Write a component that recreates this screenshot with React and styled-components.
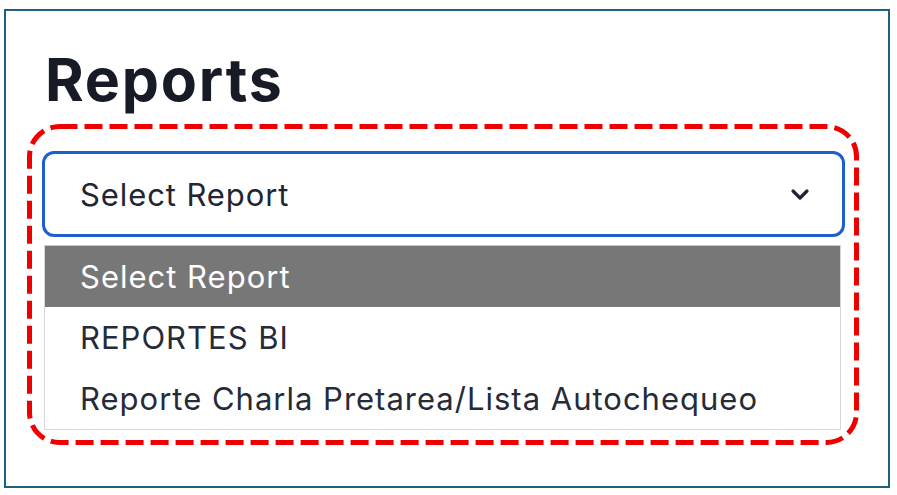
import React from 'react'
import styled, { createGlobalStyle } from 'styled-components'

const options = [
  'Select Report',
  'REPORTES BI',
  'Reporte Charla Pretarea/Lista Autochequeo',
]

export default function App() {
  return (
    <>
      <GlobalStyle />
      <Frame>
        <Title>Reports</Title>
        <AnnotatedArea>
          <SelectBox>
            <SelectValue>Select Report</SelectValue>
            <Chevron viewBox="0 0 22 14">
              <polyline points="4,4 11,11 18,4" />
            </Chevron>
          </SelectBox>
          <OptionList>
            {options.map((label, idx) => (
              <OptionRow key={idx} $active={idx === 0}>{label}</OptionRow>
            ))}
          </OptionList>
          <Highlight viewBox="0 0 832 321" preserveAspectRatio="none">
            <rect x="2.5" y="2.5" width="827" height="316" rx="30" ry="30" />
          </Highlight>
        </AnnotatedArea>
      </Frame>
    </>
  )
}

const GlobalStyle = createGlobalStyle`
  html, body {
    margin: 0;
    padding: 0;
    background: #ffffff;
  }
  body {
    font-family: Inter, "Noto Sans", sans-serif;
  }
`

const Frame = styled.div`
  box-sizing: border-box;
  margin: 9px 0 0 4px;
  width: 886px;
  height: 479px;
  border: 2px solid #1f5f80;
  padding: 39px 0 0 21px;
  background: #ffffff;
`

const Title = styled.h1`
  margin: 0 0 15px 0;
  padding-left: 18px;
  font-family: Inter, sans-serif;
  font-size: 59px;
  line-height: 59px;
  font-weight: 700;
  letter-spacing: 1.8px;
  color: #161b26;
`

const AnnotatedArea = styled.div`
  position: relative;
  box-sizing: border-box;
  width: 832px;
  height: 321px;
  padding: 27px 0 0 15px;
`

const Highlight = styled.svg`
  position: absolute;
  inset: 0;
  width: 832px;
  height: 321px;
  pointer-events: none;
  fill: none;
  stroke: #ee0000;
  stroke-width: 5;
  stroke-dasharray: 18 7;
`

const SelectBox = styled.div`
  box-sizing: border-box;
  width: 803px;
  height: 86px;
  border: 3px solid #1e5fd0;
  border-radius: 12px;
  display: flex;
  align-items: center;
  justify-content: space-between;
  padding: 0 31px 0 35px;
  background: #ffffff;
`

const SelectValue = styled.span`
  font-size: 31px;
  letter-spacing: 0.9px;
  color: #1f2533;
`

const Chevron = styled.svg`
  width: 22px;
  height: 14px;
  fill: none;
  stroke: #1f2533;
  stroke-width: 3.2;
  stroke-linecap: round;
  stroke-linejoin: round;
`

const OptionList = styled.div`
  box-sizing: border-box;
  width: 797px;
  margin: 8px 0 0 2px;
  border: 1px solid #d6d6d6;
  border-top-color: #c8c8c8;
  display: flex;
  flex-direction: column;
  background: #ffffff;
`

const OptionRow = styled.div`
  height: 61px;
  display: flex;
  align-items: center;
  padding-left: 35px;
  font-size: 31px;
  letter-spacing: 1px;
  color: ${p => (p.$active ? '#ffffff' : '#262b38')};
  background: ${p => (p.$active ? '#777777' : 'transparent')};
`
